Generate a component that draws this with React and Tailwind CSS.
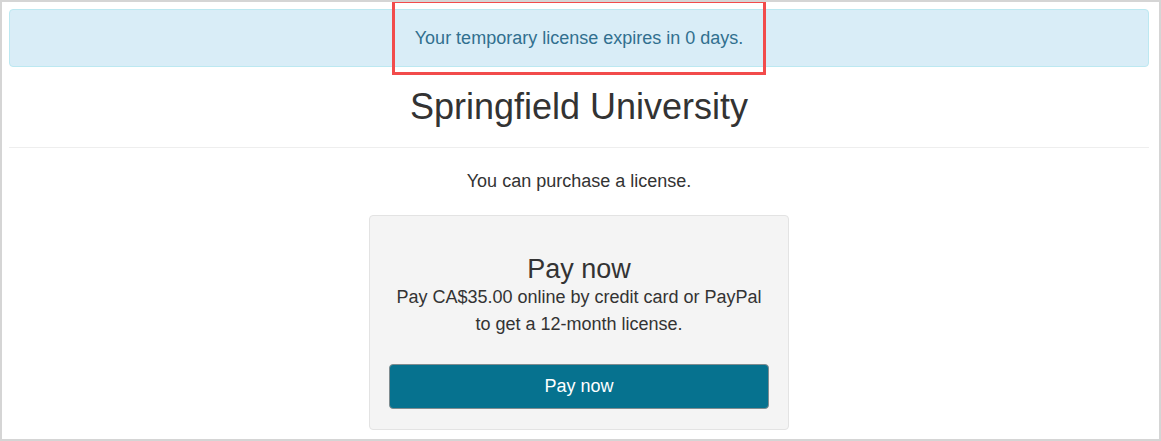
import React from "react";

const App = () => {
  return (
    <div className="relative w-[1161px] h-[441px] overflow-hidden border-2 border-[#d5d5d5] bg-white font-['Liberation_Sans',Arial,sans-serif] text-[#333]">
      <div className="pl-[7px] pr-[10px] pt-[7px]">
        {/* Notice */}
        <div className="h-[58px] flex items-center justify-center rounded-[4px] border border-[#bce8f1] bg-[#d9edf7] text-[18px] text-[#31708f]">
          Your temporary license expires in 0 days.
        </div>

        <h1 className="mt-[20px] text-center text-[36px] leading-[40px]">Springfield University</h1>
        <hr className="mt-[20px] border-t border-[#eeeeee]" />

        <p className="mt-[22px] text-center text-[18px] leading-[22px]">You can purchase a license.</p>

        {/* Purchase card */}
        <div className="mx-auto mt-[23px] w-[420px] rounded-[4px] border border-[#e3e3e3] bg-[#f4f4f4] px-[19px] pt-[38px] pb-[20px] text-center">
          <h2 className="text-[27px] leading-[30px]">Pay now</h2>
          <p className="text-[18px] leading-[27px]">
            Pay CA$35.00 online by credit card or PayPal
            <br />
            to get a 12-month license.
          </p>
          <button className="mt-[26px] h-[45px] w-full rounded-[4px] border border-[#7f8c90] bg-[#06728f] text-[18px] text-white">
            Pay now
          </button>
        </div>
      </div>

      {/* Highlight */}
      <div className="absolute left-[390px] top-[-2px] h-[75px] w-[374px] border-[3px] border-[#f24b4b]" />
    </div>
  );
};

export default App;
